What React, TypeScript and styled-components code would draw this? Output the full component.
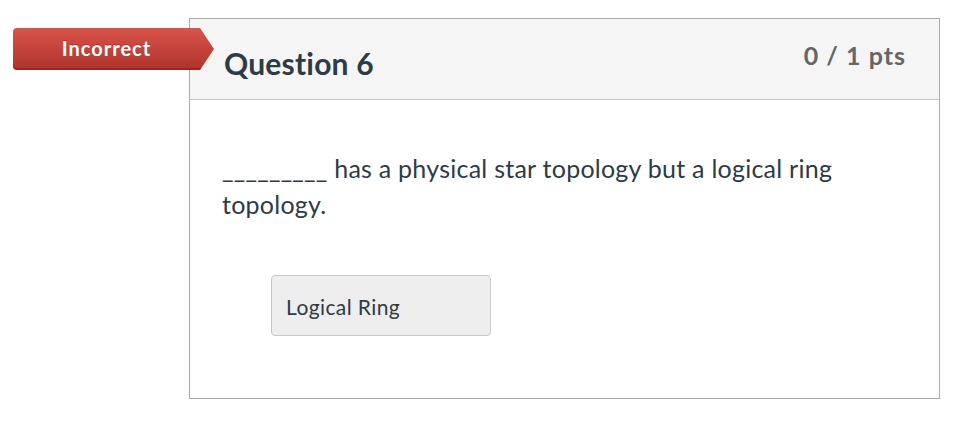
import React from "react";
import styled, { createGlobalStyle } from "styled-components";

const Global = createGlobalStyle`
  html, body { margin: 0; padding: 0; background: #ffffff; }
  body { font-family: Lato, "Noto Sans", "Liberation Sans", sans-serif; color: #2d3b45; }
  * { box-sizing: border-box; }
`;

const Page = styled.div`
  padding: 18px 0 0 189px;
`;

const QuestionWrap = styled.div`
  position: relative;
  width: 751px;
`;

const Badge = styled.div`
  position: absolute;
  left: -176px;
  top: 10px;
  width: 201px;
  height: 42px;
  padding: 0 14px 2px 0;
  display: flex;
  align-items: center;
  justify-content: center;
  color: #ffffff;
  font-size: 20px;
  font-weight: 700;
  letter-spacing: 1px;
  text-shadow: 0 -1px 0 rgba(0, 0, 0, 0.2);
  border-radius: 4px 0 0 4px;
  background: linear-gradient(#d9544b, #ae332c);
  box-shadow: inset 0 -2px 0 rgba(110, 20, 15, 0.35);
  clip-path: polygon(0 0, 187px 0, 201px 21px, 187px 42px, 0 42px);
`;

const Card = styled.div`
  border: 1px solid #aaaaaa;
  height: 381px;
  background: #ffffff;
`;

const Header = styled.div`
  height: 81px;
  background: #f5f5f5;
  border-bottom: 1px solid #c4c4c4;
  display: flex;
  justify-content: space-between;
  align-items: flex-start;
  padding: 0 33px 0 34px;
`;

const Title = styled.h2`
  margin: 26px 0 0;
  font-size: 30px;
  font-weight: 700;
  letter-spacing: 0.2px;
  line-height: 1.2;
  color: #2d3b45;
`;

const Points = styled.div`
  margin-top: 21px;
  font-size: 25px;
  font-weight: 700;
  letter-spacing: 1px;
  line-height: 1.2;
  color: #666666;
`;

const Body = styled.div`
  padding: 50px 32px 0 32px;
`;

const QuestionText = styled.p`
  margin: 0;
  font-size: 25px;
  letter-spacing: 0.25px;
  line-height: 36px;
  color: #2d3b45;
`;

const Answer = styled.div`
  margin: 53px 0 0 49px;
  width: 220px;
  height: 61px;
  padding: 2px 0 0 14px;
  display: flex;
  align-items: center;
  background: #eeeeee;
  border: 1px solid #c8c8c8;
  border-radius: 4px;
  font-size: 21px;
  letter-spacing: 0.4px;
  color: #2d3b45;
`;

export default function App() {
  return (
    <>
      <Global />
      <Page>
        <QuestionWrap>
          <Badge>Incorrect</Badge>
          <Card>
            <Header>
              <Title>Question 6</Title>
              <Points>0 / 1 pts</Points>
            </Header>
            <Body>
              <QuestionText>
                _________ has a physical star topology but a logical ring topology.
              </QuestionText>
              <Answer>Logical Ring</Answer>
            </Body>
          </Card>
        </QuestionWrap>
      </Page>
    </>
  );
}
